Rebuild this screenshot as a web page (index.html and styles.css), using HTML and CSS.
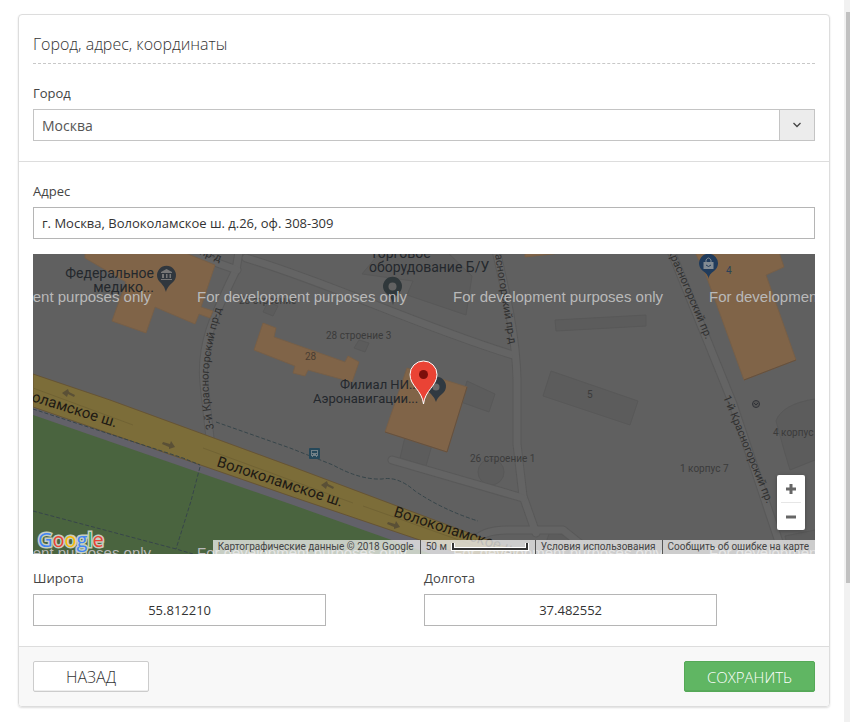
FILE: index.html
```html
<!DOCTYPE html>
<html lang="ru">
<head>
<meta charset="utf-8">
<meta name="viewport" content="width=device-width, initial-scale=1">
<title>Город, адрес, координаты</title>
<link rel="stylesheet" href="styles.css">
</head>
<body>
<div class="page">
<form class="card">
  <section class="section">
    <h1 class="title">Город, адрес, координаты</h1>
    <div class="field">
      <label class="label" for="city">Город</label>
      <div class="select">
        <select id="city" class="select-input"><option>Москва</option></select>
        <span class="select-arrow"><svg width="10" height="6" viewBox="0 0 10 6" aria-hidden="true"><path d="M1.500 1 5 4.500 8.500 1" fill="none" stroke="#444" stroke-width="1.300"/></svg></span>
      </div>
    </div>
  </section>
  <section class="section">
    <div class="field">
      <label class="label" for="address">Адрес</label>
      <input id="address" class="input" type="text" value="г. Москва, Волоколамское ш. д.26, оф. 308-309">
    </div>
    <div class="map">
      <svg class="map-canvas" viewBox="0 0 782 300" preserveAspectRatio="xMidYMid slice">
        <defs>
          <path id="street-w" d="M181 175C173 135 172 110 190 50"/>
          <path id="street-w2" d="M140-7Q165-2 198 13"/>
          <path id="street-c" d="M460-12Q468 40 478 100"/>
          <path id="street-e" d="M631-12 683 109"/>
          <path id="street-e2" d="M690 143 742 270"/>
          <path id="main-1" d="M-43 134 100 179"/>
          <path id="main-2" d="M183 212 330 260"/>
          <path id="main-3" d="M360 262 500 307"/>
        </defs>
        <rect width="782" height="300" fill="#606060"/>
        <g fill="#5c5c5c" stroke="#585858">
          <path d="M344 2 412-4 439 22 433 61 374 41 380 27 329 20Z"/>
          <path d="M522 66 613 61V72L523 77Z"/>
          <path d="M518 117 605 147 597 171 510 142Z"/>
          <path d="M434 127 462 140 456 158 428 148Z"/>
          <path d="M372 183 399 191 393 212 367 204Z"/>
          <path d="M782 145Q749 150 743 167L751 196 757 216 782 206Z"/>
          <circle cx="458" cy="218" r="13"/>
          <path d="M235 48 245 52 240 62 230 58ZM326 86 336 89 332 98 321 94Z"/>
          <path d="M517 277 540 284 535 300H509ZM752 282 782 276V300H756Z"/>
        </g>
        <g fill="none" stroke="#595959" stroke-width="9" stroke-linecap="round" stroke-linejoin="round">
          <path d="M207-8 203 16C181 62 167 90 171 130L177 184"/><path d="M120-14 204 16M213 4C300 30 380 70 480 101"/>
          <path d="M462-8C472 35 483 80 484 125V190L490 242 503 279"/><path d="M359 206 490 244M636-8 700 150 750 300"/>
          <path d="M440 290Q447 276 475 276H530L560 300"/>
        </g>
        <g fill="none" stroke="#646464" stroke-width="7" stroke-linecap="round" stroke-linejoin="round">
          <path d="M207-8 203 16C181 62 167 90 171 130L177 184"/><path d="M120-14 204 16M213 4C300 30 380 70 480 101"/>
          <path d="M462-8C472 35 483 80 484 125V190L490 242 503 279"/><path d="M359 206 490 244M636-8 700 150 750 300"/>
          <path d="M440 290Q447 276 475 276H530L560 300"/>
        </g>
        <path d="M0 152 260 242 420 297V302H390L260 251 0 161Z" fill="#626169"/>
        <path d="M0 161 260 251 398 300H0Z" fill="#4a643f"/>
        <path d="M0 120 77 146 260 213 492 300H428L260 243 0 153Z" fill="#7c6d39" stroke="#665435"/>
        <path d="M0 134 100 171M170 194 320 249M330 252 440 291" fill="none" stroke="#716334"/>
        <g fill="none" stroke="#37454a" stroke-width="1" stroke-dasharray="4 2">
          <path d="M183 168 257 194 300 211Q327 226 349 225 365 222 382 237 410 256 445 267"/>
          <path d="M0 155 150 204 167 211M167 213 158 247 143 295" /><path d="M0 257 143 295 160 300"/>
        </g>
        <g fill="#806448" stroke="#765f48">
          <path d="M52-2H150L182 11 168 53 180 57 177 64 166 60 162 70 122 53 113 79 79 67 93 28 52 4Z"/>
          <path d="M230 69 243 74 241 83 312 108 315 102 326 108 319 128 275 116 272 122 260 119 262 112 221 96Z"/>
          <path d="M374 114 434 133 414 198 352 178Z"/>
          <path d="M662-2H746L751 13 733 21 763 106 711 126 674 24Z"/><path d="M492 3V-2H530L520 0Z"/>
        </g>
        <path d="m434 133-20 65-62-20M763 106l-52 20" fill="none" stroke="#65513f"/>
        <g fill="#5a5036"><path d="m29 139 6-4 1 3 6 3-1 2-6-3-1 3Z"/><path d="m288 231 6-4 1 3 6 3-1 2-6-3-1 3ZM142 193l-6 2v-2l-7-3 1-2 7 2 1-3ZM367 273l-6 2v-2l-7-3 1-2 7 2 1-3Z"/></g>
        <g class="street">
          <text><textPath href="#street-w">3-й Красногорский пр-д</textPath></text>
          <text><textPath href="#street-w2">ский пр-д</textPath></text>
          <text><textPath href="#street-c">Красногорский пр-д</textPath></text>
          <text><textPath href="#street-e">й Красногорский пр.</textPath></text>
          <text><textPath href="#street-e2">1-й Красногорский пр.</textPath></text>
        </g>
        <g class="avenue">
          <text><textPath href="#main-1">Волоколамское ш.</textPath></text>
          <text><textPath href="#main-2">Волоколамское ш.</textPath></text>
          <text><textPath href="#main-3">Волоколамское ш.</textPath></text>
        </g>
        <g class="house">
          <text x="293" y="85">28 строение 3</text><text x="206" y="50">28 строение</text><text x="437" y="208">26 строение 1</text>
          <text x="647" y="218">1 корпус 7</text><text x="740" y="182">4 корпус</text><text x="554" y="144">5</text>
        </g>
        <g class="house-warm"><text x="272" y="106">28</text><text class="house-blue" x="693" y="20">4</text></g>
        <g class="place">
          <g class="place-large">
            <text x="121" y="24" text-anchor="end">Федеральное</text><text x="121" y="38" text-anchor="end">медико...</text>
            <text x="337" y="4">Торговое</text><text x="336" y="18">оборудование Б/У</text>
          </g>
          <text x="307" y="135">Филиал НИ...</text><text x="280" y="149">Аэронавигации...</text>
        </g>
        <path d="M133 38Q132 33 128 29A9.500 9.500 0 1 1 139 29Q134 33 133 38Z" fill="#30373e"/>
        <path d="M128 19V18L133.500 15 139 18V19ZM129 20H131V24H129ZM133 20H134.500V24H133ZM136.500 20H138V24H136.500ZM128 25H139V26H128Z" fill="#777"/>
        <path d="M360 51Q359 44 354 40A9.500 9.500 0 1 1 365 40Q361 44 360 51Z" fill="#30383b"/><circle cx="359.500" cy="32.500" r="4" fill="#626262"/>
        <path d="M403 148Q402 144 398 140A9.500 9.500 0 1 1 409 140Q404 144 403 148Z" fill="#303941"/><circle cx="403" cy="133" r="3.500" fill="#686868"/>
        <path d="M675.500 25Q675 20 670 17A9.500 9.500 0 1 1 681 17Q676 20 675.500 25Z" fill="#213c5c"/>
        <path d="M670.500 8H680.500V15H670.500Z" fill="#828b93"/><path d="M673 8V6Q675.500 2 678 6V8" fill="none" stroke="#828b93"/><path d="M673 11Q675.500 14 678 11" fill="none" stroke="#213c5c"/>
        <rect x="276" y="194" width="11" height="11" rx="1" fill="#25485a"/><path d="M278 196H285V202H284V203H283V202H280V203H279V202H278Z" fill="#718087"/><path d="M279 197H284V199H279ZM279 200H280V201H279ZM283 200H284V201H283Z" fill="#25485a"/>
        <circle cx="723" cy="150" r="3.500" fill="#555" stroke="#303238"/><path d="M721 149 723 151 725 149" fill="none" stroke="#303238"/>
        <g class="watermark">
          <text x="-92" y="48">For development purposes only</text><text x="164" y="48">For development purposes only</text><text x="420" y="48">For development purposes only</text><text x="676" y="48">For development purposes only</text>
          <text x="-92" y="304">For development purposes only</text><text x="164" y="304">For development purposes only</text><text x="420" y="304">For development purposes only</text><text x="676" y="304">For development purposes only</text>
        </g>
        <path d="M390.500 150C389 136 377 132 377 120.500A13.500 13.500 0 1 1 404 120.500C404 132 392 136 390.500 150Z" fill="#ea4335" stroke="#fff"/>
        <circle cx="390.500" cy="120.500" r="4.500" fill="#7c0f0b"/>
      </svg>
      <svg class="google" width="76" height="28" viewBox="0 0 76 28" role="img" aria-label="Google"><text x="1" y="20"><tspan fill="#4285f4">G</tspan><tspan fill="#ea4335">o</tspan><tspan fill="#fbbc05">o</tspan><tspan fill="#4285f4">g</tspan><tspan fill="#34a853">l</tspan><tspan fill="#ea4335">e</tspan></text></svg>
      <div class="zoom">
        <button class="zoom-button" type="button" aria-label="Приблизить"><svg width="12" height="12" viewBox="0 0 12 12"><path d="M1 6H11M6 1V11" stroke="#666" stroke-width="3"/></svg></button>
        <button class="zoom-button" type="button" aria-label="Отдалить"><svg width="12" height="12" viewBox="0 0 12 12"><path d="M1 6H11" stroke="#666" stroke-width="3"/></svg></button>
      </div>
      <div class="credits">
        <span class="credit">Картографические данные © 2018 Google</span>
        <span class="credit scale">50 м <svg width="78" height="8" viewBox="0 0 78 8" aria-hidden="true"><path d="M2 0V6H76V0" fill="none" stroke="#fff" stroke-width="4"/><path d="M2 0V6H76V0" fill="none" stroke="#333" stroke-width="2"/></svg></span>
        <a class="credit" href="#">Условия использования</a>
        <a class="credit" href="#">Сообщить об ошибке на карте</a>
      </div>
    </div>
    <div class="coords">
      <div class="coord"><label class="label" for="lat">Широта</label><input id="lat" class="input input-center" type="text" value="55.812210"></div>
      <div class="coord"><label class="label" for="lng">Долгота</label><input id="lng" class="input input-center" type="text" value="37.482552"></div>
    </div>
  </section>
  <footer class="footer">
    <button class="button" type="button">НАЗАД</button>
    <button class="button button-save" type="submit">СОХРАНИТЬ</button>
  </footer>
</form>
<div class="scroll" aria-hidden="true"><div class="scroll-thumb"></div></div>
</div>
</body>
</html>
```
FILE: styles.css
```css
* { box-sizing: border-box; }
body { margin: 0; background: #fff; color: #444; font: 13px/20px "Open Sans", "Noto Sans", sans-serif; }
.page { display: flex; min-height: 100vh; }
.card { flex: 1; align-self: flex-start; margin: 14px 14px 14px 18px; border: 1px solid #ddd; border-radius: 4px; box-shadow: 0 1px 2px #0002; overflow: hidden; }
.section { padding: 19px 14px 20px; border-bottom: 1px solid #ddd; }
.title { margin: 0 0 19px; padding-bottom: 8px; border-bottom: 1px dashed #c8c8c8; font-size: 16px; line-height: 21px; font-weight: 300; color: #333; }
.label { display: block; margin-bottom: 6px; }
.input { display: block; width: 100%; height: 32px; padding: 0 8px; border: 1px solid #b5b5b5; border-radius: 0; background: #fff; color: #333; font: 13px "Open Sans", sans-serif; }
.input-center { text-align: center; }
.select { display: grid; grid-template-columns: 1fr 35px; height: 32px; border: 1px solid #c4c4c4; }
.select-input { grid-area: 1 / 1 / 2 / 3; width: 100%; padding: 0 43px 0 8px; border: 0; border-radius: 0; background: none; appearance: none; color: #555; font: 14px "Open Sans", sans-serif; }
.select-arrow { grid-area: 1 / 2; display: flex; align-items: center; justify-content: center; border-left: 1px solid #c4c4c4; background: #ececec; pointer-events: none; }
.map { position: relative; height: 300px; margin: 15px 0 14px; overflow: hidden; background: #606060; }
.map-canvas { display: block; width: 100%; height: 100%; font-family: Roboto, sans-serif; }
.street { font-size: 11px; fill: #303030; }
.avenue { font-size: 15px; fill: #1e1a14; }
.house { font-size: 10px; fill: #3b3b3b; }
.house-warm { font-size: 10px; fill: #4a3d32; }
.house-blue { fill: #2a4258; }
.place { font-size: 13px; fill: #24282d; }
.place-large { font-size: 14px; }
.watermark { font: 15px "Liberation Sans", sans-serif; fill: #b9b9b9; }
.google { position: absolute; left: 4px; bottom: -1px; font: 500 20px "Open Sans", sans-serif; stroke: #c5cec1; stroke-width: 3px; paint-order: stroke; }
.zoom { position: absolute; right: 10px; bottom: 24px; display: flex; flex-direction: column; width: 28px; padding: 0 4px; background: #fff; border-radius: 2px; box-shadow: 0 1px 4px #0004; }
.zoom-button { display: flex; align-items: center; justify-content: center; height: 27px; padding: 0; border: 0; background: none; }
.zoom-button + .zoom-button { height: 28px; border-top: 1px solid #e6e6e6; }
.credits { position: absolute; right: 0; bottom: 0; display: flex; height: 14px; background: #f5f5f5bb; font: 10px/14px Roboto, sans-serif; }
.credit { padding: 0 6px 0 5px; color: #444; text-decoration: none; white-space: nowrap; }
.credit + .credit { border-left: 1px solid #555; }
.scale { display: flex; align-items: center; gap: 4px; }
.coords { display: grid; grid-template-columns: 1fr 1fr; }
.coord { width: 75%; }
.footer { display: flex; justify-content: space-between; padding: 14px; background: #f8f8f8; }
.button { height: 31px; padding: 0 32px; border: 1px solid #ccc; border-radius: 2px; box-shadow: inset 0 -1px #0001; background: #fff; color: #333; font: 300 16px "Open Sans", sans-serif; }
.button-save { padding: 0 22px; border-color: #55a957; background: #60b663; color: #fff; font-size: 15px; }
.scroll { width: 6px; padding: 12px 0 0 2px; background: #f1f1f1; }
.scroll-thumb { height: 571px; background: #c1c1c1; }
```
